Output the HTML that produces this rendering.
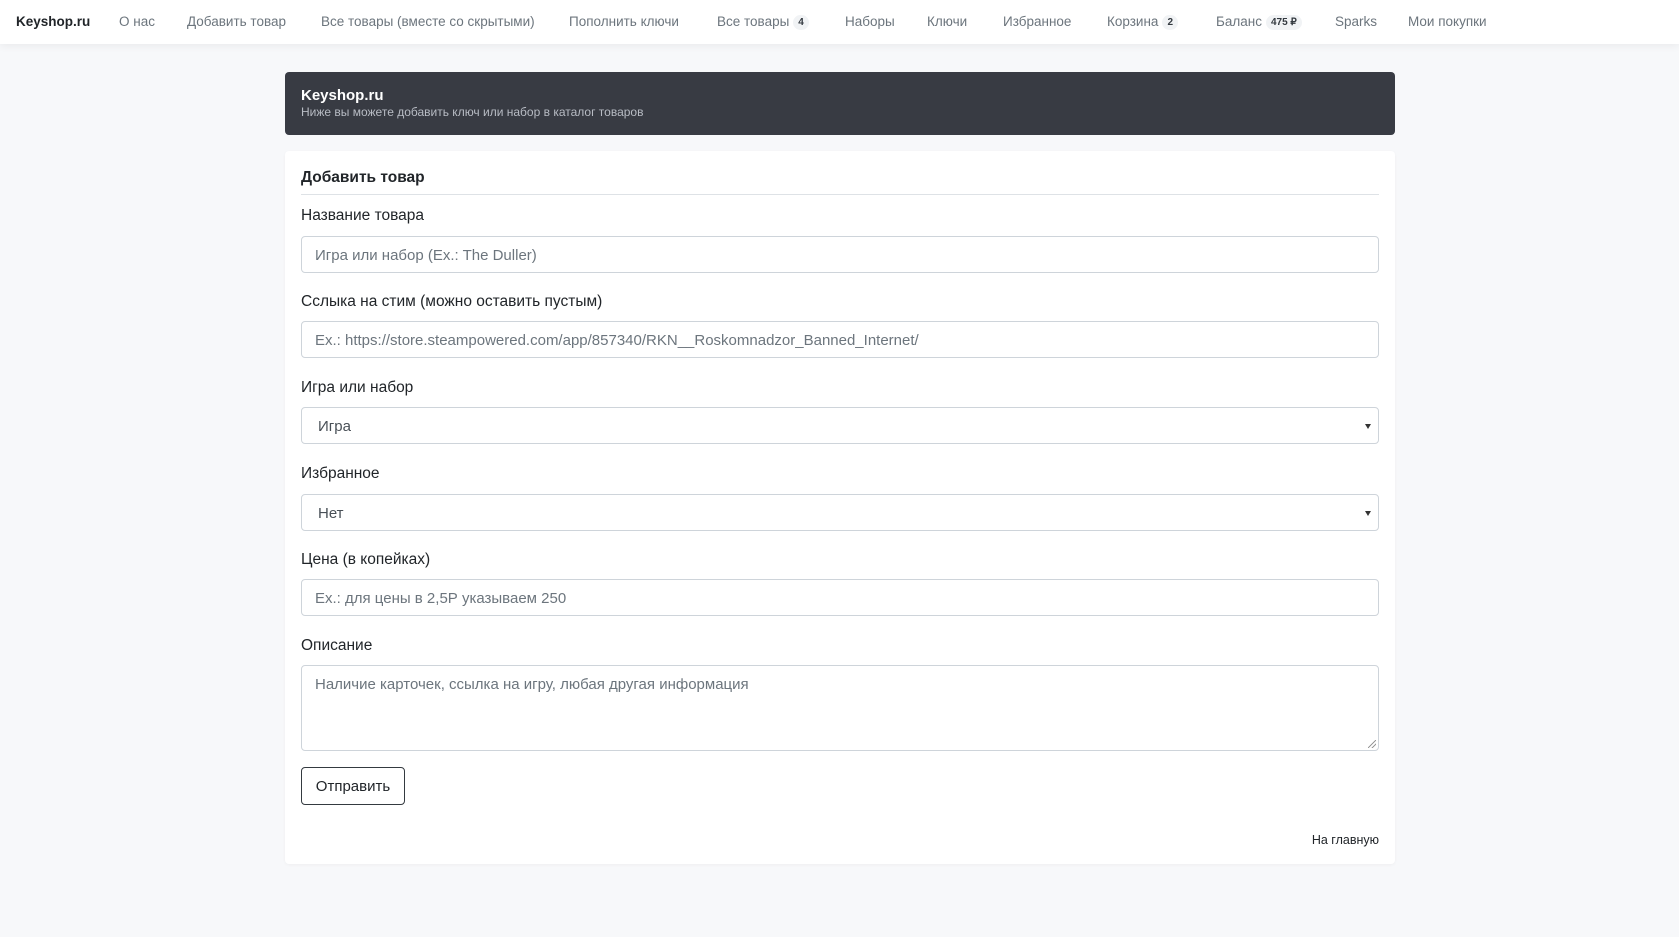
<!DOCTYPE html>
<html><head><meta charset="utf-8"><style>
*{box-sizing:border-box;margin:0;padding:0}
body{width:1679px;height:937px;background:#f7f8fa;font-family:"Liberation Sans",sans-serif;color:#212529;position:relative;overflow:hidden}
.nav{position:absolute;left:0;top:0;width:1679px;height:44px;background:#fff;box-shadow:0 2px 8px rgba(0,0,0,.06)}
.nav span{position:absolute;top:14px;font-size:13.5px;color:#6c757d;white-space:nowrap}
.nav .brand{color:#212529;font-weight:bold}
.b{display:inline-block;background:#f1f3f5;color:#343a40;font-size:10px;font-weight:bold;border-radius:8px;padding:2px 5px;margin-left:4px;vertical-align:1px}
.hero{position:absolute;left:285px;top:72px;width:1110px;height:63px;background:#383b43;border-radius:4px;color:#fff;padding:15px 16px}
.hero h1{font-size:15px;font-weight:bold;line-height:18px}
.hero p{font-size:12px;color:#b8bcc4;line-height:14px}
.card{position:absolute;left:285px;top:151px;width:1110px;height:713px;background:#fff;border-radius:4px;box-shadow:0 1px 3px rgba(0,0,0,.04)}
.a{position:absolute}
.lbl{font-size:15.5px;color:#212529;left:301px}
.in{left:301px;width:1078px;height:37px;border:1px solid #ced4da;border-radius:4px;background:#fff;font-size:15px;color:#6c757d;padding:10px 13px;line-height:18px}
.sel{color:#495057;padding-left:16px}
.sel:after{content:"";position:absolute;right:7px;top:16px;border-left:3px solid transparent;border-right:3px solid transparent;border-top:5px solid #333}
.ta:after{content:"";position:absolute;right:2px;bottom:2px;width:8px;height:8px;background:linear-gradient(135deg,transparent 45%,#999 45%,#999 55%,transparent 55%,transparent 70%,#999 70%,#999 80%,transparent 80%)}
</style></head><body>
<div class="nav">
<span class="brand" style="left:16px">Keyshop.ru</span>
<span style="left:119px">О нас</span>
<span style="left:187px">Добавить товар</span>
<span style="left:321px">Все товары (вместе со скрытыми)</span>
<span style="left:569px">Пополнить ключи</span>
<span style="left:717px">Все товары<i class="b" style="font-style:normal">4</i></span>
<span style="left:845px">Наборы</span>
<span style="left:927px">Ключи</span>
<span style="left:1003px">Избранное</span>
<span style="left:1107px">Корзина<i class="b" style="font-style:normal">2</i></span>
<span style="left:1216px">Баланс<i class="b" style="font-style:normal">475 ₽</i></span>
<span style="left:1335px">Sparks</span>
<span style="left:1408px">Мои покупки</span>
</div>
<div class="hero"><h1>Keyshop.ru</h1><p>Ниже вы можете добавить ключ или набор в каталог товаров</p></div>
<div class="card"></div>
<div class="a" style="left:301px;top:169px;font-size:15.5px;font-weight:bold">Добавить товар</div>
<div class="a" style="left:301px;top:194px;width:1078px;height:1px;background:#dee2e6"></div>
<div class="a lbl" style="top:207px">Название товара</div>
<div class="a in" style="top:236px">Игра или набор (Ex.: The Duller)</div>
<div class="a lbl" style="top:293px">Сслыка на стим (можно оставить пустым)</div>
<div class="a in" style="top:321px">Ex.: https://store.steampowered.com/app/857340/RKN__Roskomnadzor_Banned_Internet/</div>
<div class="a lbl" style="top:379px">Игра или набор</div>
<div class="a in sel" style="top:407px">Игра</div>
<div class="a lbl" style="top:465px">Избранное</div>
<div class="a in sel" style="top:494px">Нет</div>
<div class="a lbl" style="top:551px">Цена (в копейках)</div>
<div class="a in" style="top:579px">Ex.: для цены в 2,5Р указываем 250</div>
<div class="a lbl" style="top:637px">Описание</div>
<div class="a in ta" style="top:665px;height:86px">Наличие карточек, ссылка на игру, любая другая информация</div>
<div class="a" style="left:301px;top:767px;width:104px;height:38px;border:1px solid #343a40;border-radius:4px;font-size:15px;text-align:center;line-height:38px">Отправить</div>
<div class="a" style="left:1290px;top:833px;width:89px;text-align:right;font-size:12.5px;color:#212529">На главную</div>
</body></html>
